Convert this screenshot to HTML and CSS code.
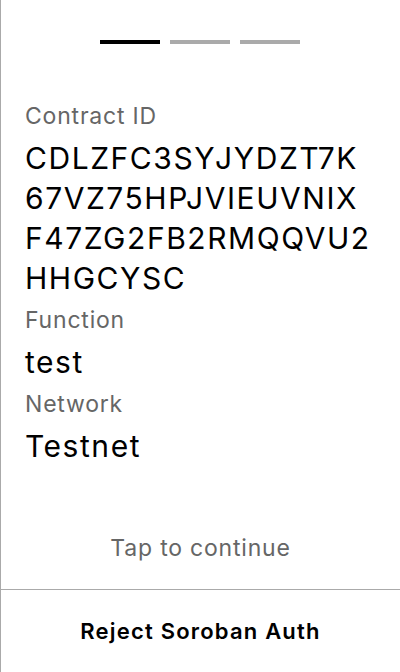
FILE: index.html
```html
<!DOCTYPE html>
<html lang="en">
<head>
<meta charset="utf-8">
<link rel="stylesheet" href="styles.css">
</head>
<body>
<div class="screen">
  <div class="progress">
    <span class="bar bar-active"></span>
    <span class="bar"></span>
    <span class="bar"></span>
  </div>
  <div class="details">
    <div class="label">Contract ID</div>
    <div class="value value-id">CDLZFC3SYJYDZT7K 67VZ75HPJVIEUVNIX F47ZG2FB2RMQQVU2 HHGCYSC</div>
    <div class="label">Function</div>
    <div class="value">test</div>
    <div class="label">Network</div>
    <div class="value">Testnet</div>
  </div>
  <div class="tap">Tap to continue</div>
  <div class="footer">Reject Soroban Auth</div>
</div>
</body>
</html>
```

FILE: styles.css
```css
* { box-sizing: border-box; }
html, body { margin: 0; padding: 0; background: #fff; }
body { font-family: Inter, "Noto Sans", sans-serif; }
.screen {
  width: 400px;
  height: 672px;
  border-left: 1px solid #aaa;
  display: flex;
  flex-direction: column;
}
.progress {
  display: flex;
  justify-content: center;
  gap: 10px;
  margin-top: 40px;
  padding-right: 1px;
}
.bar {
  width: 60px;
  height: 4px;
  background: #aaa;
}
.bar-active { background: #000; }
.details {
  flex: 1;
  padding: 50px 0 0 24px;
}
.label {
  font-size: 23px;
  line-height: 44px;
  letter-spacing: 0.8px;
  color: #666;
}
.value {
  font-size: 30px;
  line-height: 40px;
  letter-spacing: 1.55px;
  color: #000;
}
.value-id { width: 370px; }
.tap {
  text-align: center;
  font-size: 23px;
  line-height: 30px;
  letter-spacing: 0.8px;
  color: #666;
  margin-bottom: 26px;
}
.footer {
  border-top: 1px solid #aaa;
  height: 83px;
  display: flex;
  align-items: center;
  justify-content: center;
  font-size: 22px;
  font-weight: 600;
  letter-spacing: 1.2px;
  color: #000;
}
```
